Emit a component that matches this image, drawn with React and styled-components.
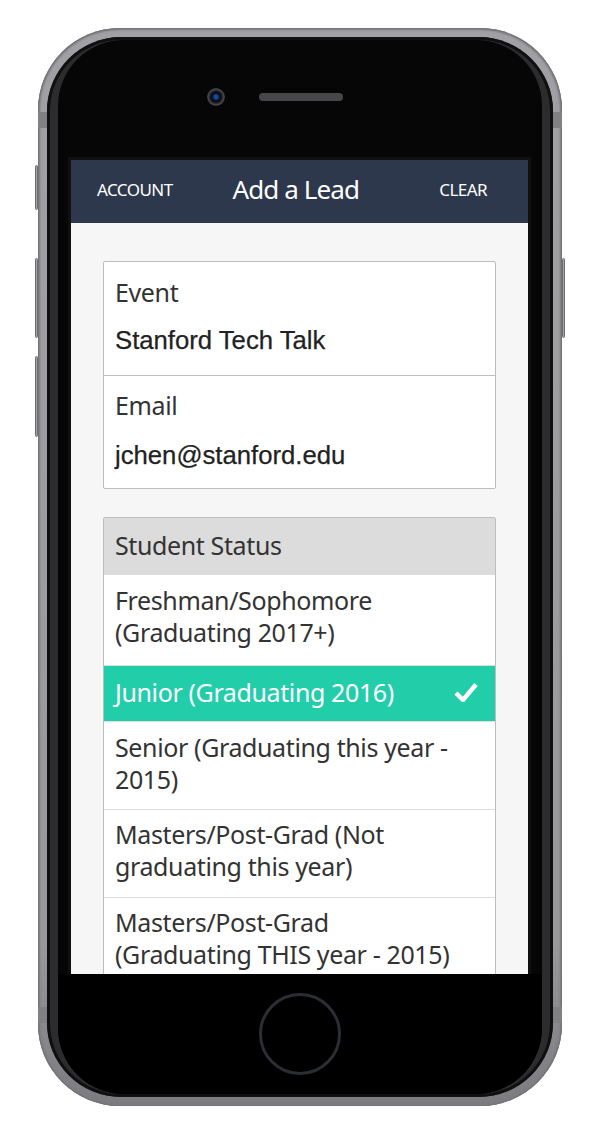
import React from "react";
import styled, { createGlobalStyle } from "styled-components";

const Global = createGlobalStyle`
  html, body { margin: 0; padding: 0; background: #fff; }
  body { font-family: "Noto Sans", "Liberation Sans", sans-serif; }
`;

const Page = styled.div`
  width: 600px;
  height: 1139px;
  padding: 28px 38px 0;
  box-sizing: border-box;
  overflow: hidden;
`;

const Phone = styled.div`
  position: relative;
  width: 524px;
  height: 1078px;
  box-sizing: border-box;
  padding: 9px;
  border-radius: 82px;
  background: linear-gradient(#a0a0a5, #97979c 85%, #7c7c80);
  box-shadow: inset 0 0 0 1px #747478, inset 0 0 2px 2px #7b7b7f;
`;

const SideButton = styled.div`
  position: absolute;
  ${(p) => (p.$right ? "right: -3px;" : "left: -3px;")}
  top: ${(p) => p.$top}px;
  width: 3px;
  height: ${(p) => p.$h}px;
  background: #a4a4a8;
  border: 1px solid #6d6d72;
  box-sizing: border-box;
  border-radius: 2px;
`;

const Band = styled.div`
  position: absolute;
  top: ${(p) => p.$top}px;
  ${(p) => (p.$right ? "right: 0;" : "left: 0;")}
  width: 9px;
  height: 16px;
  background: #818185;
`;

const Glass = styled.div`
  position: relative;
  height: 100%;
  box-sizing: border-box;
  border-radius: 74px;
  padding: 3px 11px;
  background: #2c2c2e;
  box-shadow: inset 0 0 0 3px #101011;
`;

const Face = styled.div`
  height: 100%;
  border-radius: 66px;
  background: #060607;
  display: flex;
  flex-direction: column;
  overflow: hidden;
`;

const TopBezel = styled.div`
  height: 120px;
  flex: none;
  display: flex;
  align-items: flex-end;
  padding: 0 0 59px 149px;
  box-sizing: border-box;
  gap: 34px;
`;

const Camera = styled.div`
  width: 18px;
  height: 18px;
  margin-bottom: -5px;
  border-radius: 50%;
  background: radial-gradient(circle, #1a4a9a 0 2px, #0c1a38 3px, #0a0a10 5px, #4a4a50 8px, #2e2e32 9px);
`;

const Speaker = styled.div`
  width: 84px;
  height: 8px;
  border-radius: 4px;
  background: #47474a;
`;

const Screen = styled.div`
  flex: none;
  width: 457px;
  height: 814px;
  margin-left: 13px;
  display: flex;
  flex-direction: column;
  overflow: hidden;
  background: #f6f6f6;
  box-shadow: 0 0 0 3px #101011;
`;

const Header = styled.header`
  flex: none;
  height: 63px;
  display: flex;
  align-items: center;
  padding: 0 41px 4px 26px;
  box-sizing: border-box;
  background: #2e384d;
  color: #fff;
`;

const HeaderAction = styled.span`
  font-size: 17px;
  letter-spacing: -0.55px;
  ${(p) => p.$end && "margin-left: auto;"}
`;

const Title = styled.h1`
  margin: 0 0 2px 60px;
  font-size: 26px;
  font-weight: 400;
  letter-spacing: -0.9px;
`;

const Content = styled.main`
  padding: 38px 32px 0;
  display: flex;
  flex-direction: column;
  gap: 28px;
`;

const Group = styled.section`
  background: #fff;
  border: 1px solid #bdbdbd;
  border-radius: 2px;
`;

const Label = styled.div`
  font-size: 25px;
  line-height: 36px;
  letter-spacing: -0.38px;
  color: #333;
`;

const Value = styled.div`
  margin-top: 12px;
  font-family: "Liberation Sans", Arial, sans-serif;
  font-size: 25.7px;
  line-height: 36px;
  color: #222;
  -webkit-text-stroke: 0.25px #222;
`;

const Field = styled.div`
  height: 113px;
  box-sizing: border-box;
  padding: 12px 11px 0;
  & + & { padding-top: 11px; border-top: 1px solid #bdbdbd; }
  & + & ${Value} { margin-top: 14px; }
`;

const GroupHead = styled.div`
  height: 57px;
  padding: 0 11px 4px;
  box-sizing: border-box;
  display: flex;
  align-items: center;
  background: #dcdcdc;
  font-size: 25px;
  letter-spacing: -0.38px;
  color: #333;
`;

const Option = styled.div`
  display: flex;
  align-items: center;
  justify-content: space-between;
  padding: ${(p) => p.$pad};
  font-size: 25px;
  line-height: 32px;
  letter-spacing: -0.38px;
  color: ${(p) => (p.$on ? "#fff" : "#333")};
  background: ${(p) => (p.$on ? "#22ceaa" : "#fff")};
  & + & { border-top: 1px solid #ddd; }
`;

const OptionText = styled.span`
  max-width: 345px;
`;

const CheckMark = styled.svg`
  margin-right: 6px;
`;

const Bottom = styled.div`
  flex: 1;
  background: #000;
  display: flex;
  justify-content: center;
  padding-top: 19px;
`;

const Home = styled.div`
  width: 82px;
  height: 82px;
  box-sizing: border-box;
  border-radius: 50%;
  border: 3px solid #2b2e32;
`;

const Check = () => (
  <CheckMark width="24" height="20" viewBox="0 0 24 20">
    <path d="M2 11l7 7L22 2.5" fill="none" stroke="#fff" strokeWidth="4.4" />
  </CheckMark>
);

const options = [
  { text: "Freshman/Sophomore (Graduating 2017+)", pad: "9px 11px 17px" },
  { text: "Junior (Graduating 2016)", pad: "10px 11px 13px", on: true },
  { text: "Senior (Graduating this year - 2015)", pad: "9px 11px 14px" },
  { text: "Masters/Post-Grad (Not graduating this year)", pad: "8px 11px 15px" },
  { text: "Masters/Post-Grad (Graduating THIS year - 2015)", pad: "8px 11px 15px" },
];

export default function App() {
  return (
    <Page>
      <Global />
      <Phone>
        <SideButton $top={137} $h={45} />
        <SideButton $top={230} $h={80} />
        <SideButton $top={328} $h={81} />
        <SideButton $right $top={230} $h={80} />
        <Band $top={84} />
        <Band $right $top={84} />
        <Band $top={979} />
        <Band $right $top={979} />
        <Glass>
          <Face>
            <TopBezel>
              <Camera />
              <Speaker />
            </TopBezel>
            <Screen>
              <Header>
                <HeaderAction>ACCOUNT</HeaderAction>
                <Title>Add a Lead</Title>
                <HeaderAction $end>CLEAR</HeaderAction>
              </Header>
              <Content>
                <Group>
                  <Field>
                    <Label>Event</Label>
                    <Value>Stanford Tech Talk</Value>
                  </Field>
                  <Field>
                    <Label>Email</Label>
                    <Value>jchen@stanford.edu</Value>
                  </Field>
                </Group>
                <Group>
                  <GroupHead>Student Status</GroupHead>
                  {options.map((o) => (
                    <Option key={o.text} $on={o.on} $pad={o.pad}>
                      <OptionText>{o.text}</OptionText>
                      {o.on && <Check />}
                    </Option>
                  ))}
                </Group>
              </Content>
            </Screen>
            <Bottom>
              <Home />
            </Bottom>
          </Face>
        </Glass>
      </Phone>
    </Page>
  );
}
